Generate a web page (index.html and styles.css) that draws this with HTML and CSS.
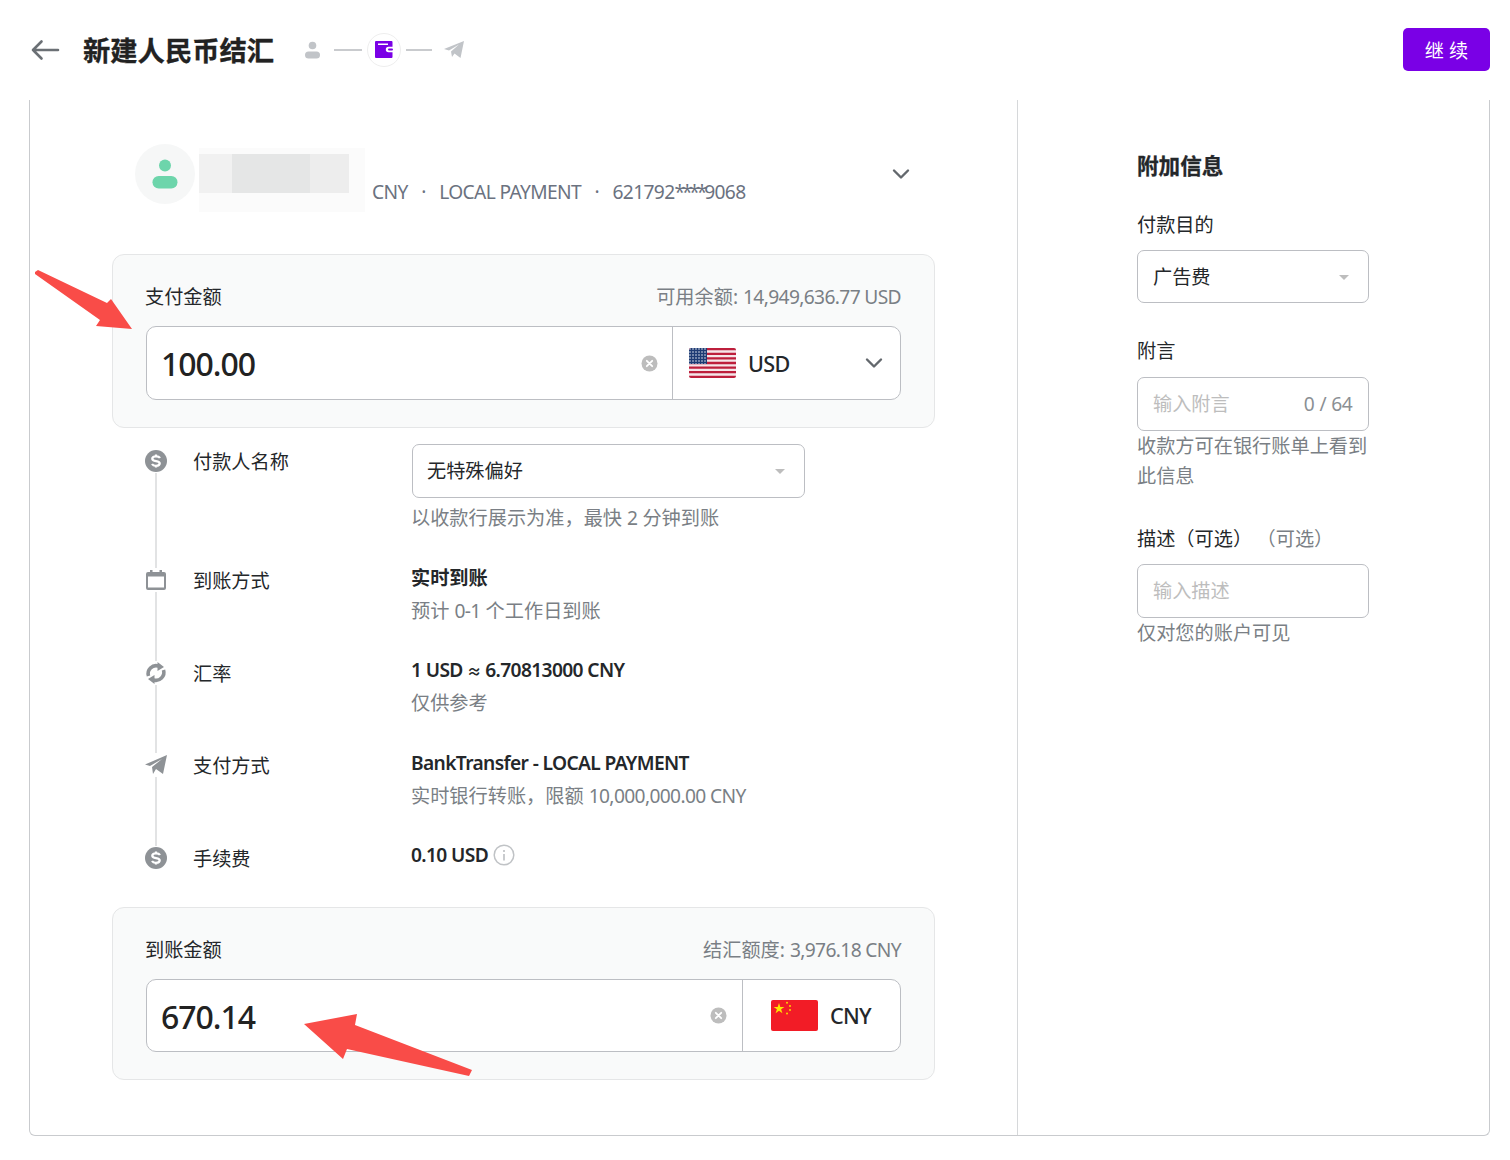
FILE: index.html
```html
<!DOCTYPE html>
<html lang="zh-CN">
<head>
<meta charset="utf-8">
<title>新建人民币结汇</title>
<link rel="stylesheet" href="styles.css">
</head>
<body>
<header class="topbar">
  <svg class="back" width="30" height="24" viewBox="0 0 30 24"><path d="M28 12H3M11.500 3.500 3 12l8.500 8.500" fill="none" stroke="#6b7075" stroke-width="2.600" stroke-linecap="round" stroke-linejoin="round"/></svg>
  <h1 class="title">新建人民币结汇</h1>
  <div class="steps">
    <svg width="15" height="18" viewBox="0 0 15 18"><circle cx="7.500" cy="4.500" r="3.800" fill="#c1c4c8"/><rect x="0" y="10.500" width="15" height="7" rx="3.500" fill="#c1c4c8"/></svg>
    <span class="step-line step-line-a"></span>
    <span class="step-current">
      <svg width="18" height="17" viewBox="0 0 18 17"><path d="M1 0h15.500a1 1 0 0 1 1 1v4.800h-4a2.700 2.700 0 0 0 0 5.400h4V16a1 1 0 0 1-1 1H1a1 1 0 0 1-1-1V1a1 1 0 0 1 1-1z" fill="#7a00e6"/><rect x="3" y="2.500" width="10" height="1.500" fill="#fff"/><rect x="13" y="7.500" width="5" height="2" rx="1" fill="#7a00e6"/></svg>
    </span>
    <span class="step-line step-line-b"></span>
    <svg width="20" height="17" viewBox="0 0 20 17"><path d="M0 8 20 0 16.500 17 10.500 12.500 8 16 7 10.500 15 3.500 5 9.500z" fill="#c1c4c8"/></svg>
  </div>
  <button class="primary">继 续</button>
</header>

<main class="panel">
  <section class="left">
    <div class="payee">
      <span class="avatar"><svg width="26" height="30" viewBox="0 0 26 30"><circle cx="13" cy="6.500" r="6" fill="#6dd5ab"/><rect x="0.500" y="17" width="25" height="12.500" rx="6.200" fill="#6dd5ab"/></svg></span>
      <div class="mosaic"></div>
      <div class="payee-meta lat">CNY<i>·</i>LOCAL PAYMENT<i>·</i>621792<span class="mask">****</span>9068</div>
      <svg class="payee-caret" width="18" height="12" viewBox="0 0 18 12"><path d="M2 2.500 9 9.500l7-7" fill="none" stroke="#63686d" stroke-width="2.400" stroke-linecap="round" stroke-linejoin="round"/></svg>
    </div>

    <div class="amount-card">
      <div class="amount-head"><span>支付金额</span><span class="muted">可用余额: <span class="lat">14,949,636.77 USD</span></span></div>
      <div class="amount-box">
        <span class="amount-value lat">100.00</span>
        <svg class="clear" width="17" height="17" viewBox="0 0 17 17"><circle cx="8.500" cy="8.500" r="8" fill="#bdbdbd"/><path d="m5.800 5.800 5.400 5.400m0-5.400-5.400 5.400" stroke="#fff" stroke-width="1.800" stroke-linecap="round"/></svg>
        <div class="currency currency-usd">
          <svg width="47" height="30" viewBox="0 0 47 30"><defs><clipPath id="f"><rect width="47" height="30" rx="2"/></clipPath><pattern id="st" width="3" height="3" patternUnits="userSpaceOnUse"><rect width="3" height="3" fill="#1d3b73"/><circle cx="1" cy="1" r=".8" fill="#dfe4ee"/></pattern></defs><g clip-path="url(#f)"><rect width="47" height="30" fill="#f5e6e9"/><path d="M0 1.200h47M0 5.800h47M0 10.400h47M0 15h47M0 19.600h47M0 24.200h47M0 28.800h47" stroke="#bd1f3c" stroke-width="2.300"/><rect width="18" height="16" fill="url(#st)"/></g></svg>
          <span class="code lat">USD</span>
          <svg class="currency-caret" width="18" height="12" viewBox="0 0 18 12"><path d="M2 2.500 9 9.500l7-7" fill="none" stroke="#63686d" stroke-width="2.400" stroke-linecap="round" stroke-linejoin="round"/></svg>
        </div>
      </div>
    </div>

    <div class="timeline">
      <div class="row row-payer">
        <span class="row-icon"><svg width="22" height="22" viewBox="0 0 22 22"><circle cx="11" cy="11" r="11" fill="#8e9296"/><path d="M15 8c-.7-1.200-2.200-1.700-4-1.700-2 0-3.700.9-3.700 2.500 0 3.300 7.400 1.300 7.400 4.500 0 1.600-1.700 2.500-3.700 2.500-1.800 0-3.300-.6-4-1.800M11 4.500v2M11 15.500v2" fill="none" stroke="#fff" stroke-width="2.300"/></svg></span>
        <span class="row-label">付款人名称</span>
        <div class="row-value">
          <div class="select select-wide"><span>无特殊偏好</span><span class="tri"></span></div>
          <div class="muted hint">以收款行展示为准，最快 <span class="lat">2</span> 分钟到账</div>
        </div>
      </div>
      <div class="row">
        <span class="row-icon"><svg width="20" height="20" viewBox="0 0 20 20"><path d="M4 2V0h2.500v2h7V0H16v2h2a2 2 0 0 1 2 2v14a2 2 0 0 1-2 2H2a2 2 0 0 1-2-2V4a2 2 0 0 1 2-2zM2 6.500v11h16v-11z" fill="#8e9296" fill-rule="evenodd"/></svg></span>
        <span class="row-label">到账方式</span>
        <div class="row-value"><div class="strong bold">实时到账</div><div class="muted sub">预计 <span class="lat">0-1</span> 个工作日到账</div></div>
      </div>
      <div class="row">
        <span class="row-icon"><svg width="22" height="22" viewBox="0 0 22 22"><g fill="none" stroke="#8e9296" stroke-width="3.600"><path d="M3.500 14A8 8 0 0 1 13.500 4"/><path d="M18.500 8A8 8 0 0 1 8.500 18"/></g><path d="M12.500 0 19 5 12.500 9zM9.500 13 3 17l6.500 5z" fill="#8e9296"/></svg></span>
        <span class="row-label">汇率</span>
        <div class="row-value"><div class="strong lat raised">1 USD <span class="approx">≈</span> 6.70813000 CNY</div><div class="muted sub">仅供参考</div></div>
      </div>
      <div class="row">
        <span class="row-icon"><svg width="22" height="20" viewBox="0 0 22 20"><path d="M0 9.500 22 0 18 19 11 14 8 19 7 12 17 4 5 11z" fill="#8e9296"/></svg></span>
        <span class="row-label">支付方式</span>
        <div class="row-value"><div class="strong lat">BankTransfer - LOCAL PAYMENT</div><div class="muted sub sub-tight">实时银行转账，限额 <span class="lat">10,000,000.00 CNY</span></div></div>
      </div>
      <div class="row row-last">
        <span class="row-icon"><svg width="22" height="22" viewBox="0 0 22 22"><circle cx="11" cy="11" r="11" fill="#8e9296"/><path d="M15 8c-.7-1.200-2.200-1.700-4-1.700-2 0-3.700.9-3.700 2.500 0 3.300 7.400 1.300 7.400 4.500 0 1.600-1.700 2.500-3.700 2.500-1.800 0-3.300-.6-4-1.800M11 4.500v2M11 15.500v2" fill="none" stroke="#fff" stroke-width="2.300"/></svg></span>
        <span class="row-label">手续费</span>
        <div class="row-value"><div class="strong fee lat raised">0.10 USD <svg width="22" height="22" viewBox="0 0 22 22"><circle cx="11" cy="11" r="9.800" fill="none" stroke="#c0c3c6" stroke-width="1.500"/><path d="M11 10v6.500M11 6v2" stroke="#c0c3c6" stroke-width="1.700"/></svg></div></div>
      </div>
    </div>

    <div class="amount-card amount-card-b">
      <div class="amount-head"><span>到账金额</span><span class="muted">结汇额度: <span class="lat">3,976.18 CNY</span></span></div>
      <div class="amount-box amount-box-b">
        <span class="amount-value lat">670.14</span>
        <svg class="clear" width="17" height="17" viewBox="0 0 17 17"><circle cx="8.500" cy="8.500" r="8" fill="#bdbdbd"/><path d="m5.800 5.800 5.400 5.400m0-5.400-5.400 5.400" stroke="#fff" stroke-width="1.800" stroke-linecap="round"/></svg>
        <div class="currency currency-cny">
          <svg width="47" height="31" viewBox="0 0 47 31"><rect width="47" height="31" rx="2" fill="#f21c26"/><path d="m8 3 1.300 3.900h4.100l-3.300 2.400 1.300 3.900L8 10.800l-3.400 2.400 1.300-3.900-3.300-2.400h4.100z" fill="#ffe600"/><circle cx="16" cy="2.800" r="1" fill="#ffd400"/><circle cx="19" cy="6" r="1" fill="#ffd400"/><circle cx="19" cy="10" r="1" fill="#ffd400"/><circle cx="16" cy="13.500" r="1" fill="#ffd400"/></svg>
          <span class="code lat">CNY</span>
        </div>
      </div>
    </div>
  </section>

  <aside class="right">
    <h2 class="side-title">附加信息</h2>
    <div class="field field-purpose">
      <label class="field-label">付款目的</label>
      <div class="select"><span>广告费</span><span class="tri"></span></div>
    </div>
    <div class="field field-note">
      <label class="field-label">附言</label>
      <div class="select"><span class="placeholder">输入附言</span><span class="count lat">0 / 64</span></div>
      <div class="muted field-hint">收款方可在银行账单上看到此信息</div>
    </div>
    <div class="field field-desc">
      <label class="field-label">描述（可选）<span class="muted optional">（可选）</span></label>
      <div class="select"><span class="placeholder">输入描述</span></div>
      <div class="muted field-hint">仅对您的账户可见</div>
    </div>
  </aside>
</main>

<svg class="annot annot-top" width="100" height="62" viewBox="0 0 100 62"><path d="M0 3 3 1 72 34 76 30 97 60 61 57 65 51 0 5z" fill="#f94c48"/></svg>
<svg class="annot annot-bottom" width="170" height="66" viewBox="0 0 170 66"><path d="M0 11 53 1 51 12 168 57 165 63 43 36 39 46z" fill="#f94c48"/></svg>
</body>
</html>
```
FILE: styles.css
```css
* { box-sizing: border-box; }
html, body { margin: 0; padding: 0; }
body {
  width: 1510px;
  height: 1160px;
  overflow: hidden;
  position: relative;
  background: #fff;
  color: #24272a;
  font-family: "Noto Sans", "Noto Sans CJK SC", sans-serif;
  font-size: 19.2px;
  line-height: 1.5;
}
.lat { letter-spacing: -0.033em; }
.mask { letter-spacing: -0.165em; }
.topbar {
  height: 100px;
  display: flex;
  align-items: center;
  padding: 0 20px 1px 30px;
}
.back { flex: none; }
.title {
  margin: 3px 0 0 23px;
  font-size: 27.3px;
  font-weight: 700;
  color: #222;
  line-height: 1.4;
  -webkit-text-stroke: 0.3px #222;
}
.steps {
  display: flex;
  align-items: center;
  margin-left: 31px;
}
.step-line { display: block; width: 28px; height: 2px; background: #c9cbce; }
.step-line-a { margin-left: 14px; margin-right: 5px; }
.step-line-b { margin-left: 5px; margin-right: 12px; width: 26px; }
.step-current {
  width: 34px;
  height: 34px;
  border: 1px solid #eee;
  border-radius: 50%;
  display: flex;
  align-items: center;
  justify-content: center;
}
.primary {
  margin-left: auto;
  width: 87px;
  height: 43px;
  border: 0;
  border-radius: 5px;
  background: #7a00e6;
  color: #fff;
  font: 400 19.2px "Noto Sans", "Noto Sans CJK SC", sans-serif;
}
.panel {
  margin: 0 20px 0 29px;
  height: 1036px;
  display: grid;
  grid-template-columns: 988px 1fr;
  border: 1px solid #c9cbce;
  border-top: 0;
  border-radius: 0 0 6px 6px;
}
.left { border-right: 1px solid #d6d8da; padding: 44px 0 0 82px; }
.payee { display: flex; align-items: flex-start; height: 110px; width: 823px; padding-left: 23px; }
.avatar {
  flex: none;
  width: 60px;
  height: 60px;
  border-radius: 50%;
  background: #f6f7f7;
  display: flex;
  align-items: center;
  justify-content: center;
}
.mosaic {
  flex: none;
  width: 166px;
  height: 64px;
  margin: 4px 0 0 4px;
  background:
    linear-gradient(#e5e6e6, #e5e6e6) 33px 6px / 78px 39px no-repeat,
    linear-gradient(#ededed, #ededed) 111px 6px / 39px 39px no-repeat,
    linear-gradient(#f1f1f1, #f1f1f1) 0 6px / 33px 39px no-repeat,
    #fbfbfb;
}
.payee-meta {
  margin: 34px 0 0 7px;
  color: #6b7280;
  font-size: 19.2px;
  white-space: nowrap;
}
.payee-meta i { font-style: normal; margin: 0 13.500px; }
.payee-caret { margin: 24px 25px 0 auto; }
.amount-card {
  width: 823px;
  height: 174px;
  background: #f9fafa;
  border: 1px solid #e5e6e7;
  border-radius: 12px;
  padding: 28px 33px 0;
}
.amount-card-b { height: 173px; }
.amount-head { display: flex; justify-content: space-between; height: 43px; margin-left: -1px; }
.muted { color: #7a7f85; }
.amount-box {
  display: flex;
  align-items: center;
  height: 74px;
  background: #fff;
  border: 1px solid #bcbec3;
  border-radius: 10px;
  padding-left: 14px;
}
.amount-box-b { height: 73px; }
.amount-value { font-size: 32px; font-weight: 500; color: #222; flex: 1; margin-top: 2px; }
.clear { flex: none; margin-right: 14px; }
.amount-box-b .clear { margin-right: 15px; }
.currency { display: flex; align-items: center; height: 100%; border-left: 1px solid #bcbec3; flex: none; }
.currency-usd { width: 228px; padding-left: 16px; }
.currency-cny { width: 158px; padding-left: 28px; }
.code { margin: 2px 0 0 12px; font-size: 21.6px; font-weight: 500; }
.currency-caret { margin-left: auto; margin-right: 17px; }
.timeline { position: relative; padding: 16px 0 0 33px; height: 479px; }
.timeline::before {
  content: "";
  position: absolute;
  left: 43px;
  top: 30px;
  height: 400px;
  width: 2px;
  background: #e2e3e4;
}
.row { position: relative; display: flex; height: 92.500px; }
.row-payer { height: 120px; }
.row-icon {
  position: relative;
  flex: none;
  width: 22px;
  height: 24px;
  margin-top: 4px;
  background: #fff;
  display: flex;
  align-items: center;
  justify-content: center;
}
.row-payer .row-icon { margin-top: 5px; }
.row-label { width: 218px; margin: 3px 0 0 26px; }
.row-payer .row-label { margin-top: 4px; }
.row-value { flex: 1; }
.select {
  width: 232px;
  height: 54px;
  display: flex;
  align-items: center;
  justify-content: space-between;
  background: #fff;
  border: 1px solid #bcbec3;
  border-radius: 7px;
  padding: 0 16px 0 15px;
}
.select-wide { width: 393px; margin-left: 1px; padding-left: 14px; }
.field-purpose .select { height: 53px; padding-top: 1px; }
.tri { width: 0; height: 0; margin-right: 3px; border: 5px solid transparent; border-top: 5px solid #bdbdbd; border-bottom: 0; }
.hint { margin-top: 6px; }
.strong { font-weight: 600; }
.bold { font-weight: 700; margin-bottom: -1px; }
.raised { margin-top: -1px; }
.approx { font-size: 0.75em; }
.sub { margin-top: 5px; }
.sub-tight { margin-top: 4px; }
.fee { display: flex; align-items: center; gap: 5px; }
.right { padding: 48px 0 0 119px; }
.side-title { margin: 0; font-size: 21.6px; font-weight: 700; line-height: 36px; -webkit-text-stroke: 0.3px #24272a; }
.field-label { display: block; line-height: 29px; margin-bottom: 11px; }
.field-purpose { margin-top: 26px; }
.field-note { margin-top: 33px; }
.field-note .field-label { margin-bottom: 12px; }
.field-desc { margin-top: 33px; }
.field-hint { width: 232px; line-height: 30px; margin-top: 0; }
.placeholder { color: #bdbdbd; }
.count { color: #8b8f94; word-spacing: 1px; }
.optional { margin-left: 14px; }
.annot { position: absolute; }
.annot-top { left: 35px; top: 269px; }
.annot-bottom { left: 304px; top: 1013px; }
```
